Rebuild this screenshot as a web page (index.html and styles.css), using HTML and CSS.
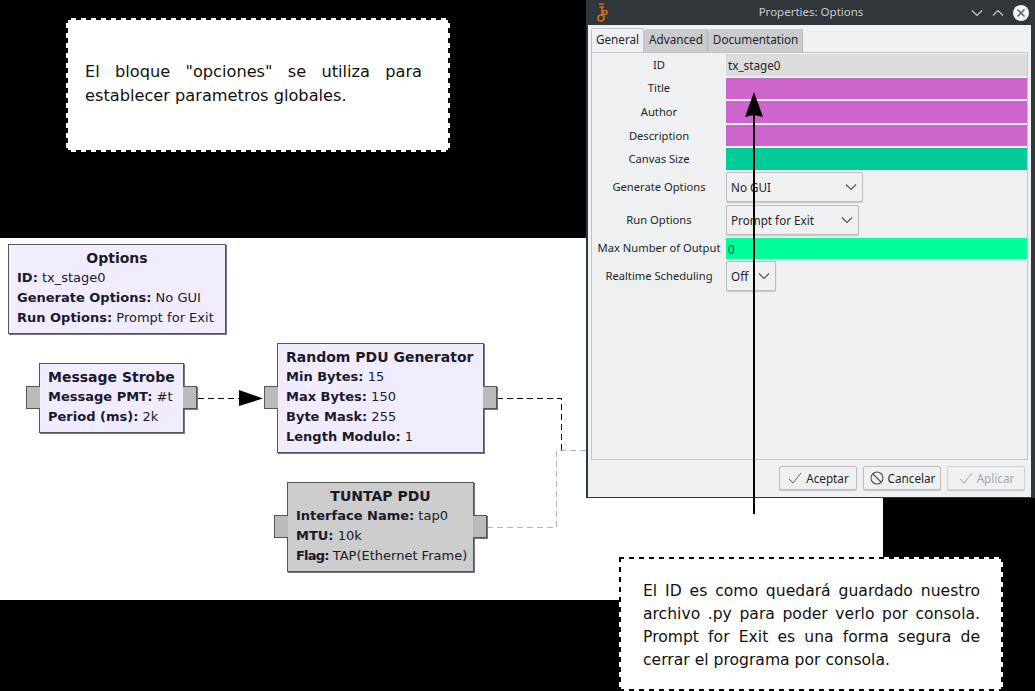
FILE: index.html
```html
<!DOCTYPE html>
<html lang="es">

<head>
  <meta charset="UTF-8">
  <title>Properties: Options</title>
  <link rel="stylesheet" href="styles.css">
</head>

<body>
  <div class="flowgraph">
    <svg class="wires" width="883" height="362" viewBox="0 238 883 362">
      <path class="wire" d="M198 398.5H240"/>
      <path class="head" d="M239 390L263 398.5L239 406Z"/>
      <path class="wire" d="M497 398.5H561.5V450"/>
      <path class="wire off" d="M487 527.5H556.5V450.5H586"/>
    </svg>

    <div class="block strobe">
      <span class="port left"></span><span class="port right"></span>
      <div class="block-title">Message Strobe</div>
      <div class="param"><b>Message PMT:</b> #t</div>
      <div class="param"><b>Period (ms):</b> 2k</div>
    </div>

    <div class="block options">
      <div class="block-title center">Options</div>
      <div class="param"><b>ID:</b> tx_stage0</div>
      <div class="param"><b>Generate Options:</b> No GUI</div>
      <div class="param"><b>Run Options:</b> Prompt for Exit</div>
    </div>

    <div class="block random">
      <span class="port left"></span><span class="port right"></span>
      <div class="block-title">Random PDU Generator</div>
      <div class="param"><b>Min Bytes:</b> 15</div>
      <div class="param"><b>Max Bytes:</b> 150</div>
      <div class="param"><b>Byte Mask:</b> 255</div>
      <div class="param"><b>Length Modulo:</b> 1</div>
    </div>

    <div class="block tuntap">
      <span class="port left"></span><span class="port right"></span>
      <div class="block-title center">TUNTAP PDU</div>
      <div class="param"><b>Interface Name:</b> tap0</div>
      <div class="param"><b>MTU:</b> 10k</div>
      <div class="param"><b class="tight">Flag:</b> TAP(Ethernet Frame)</div>
    </div>
  </div>

  <div class="note note-top">
    <p>El bloque "opciones" se utiliza para establecer parametros globales.</p>
  </div>

  <div class="dialog">
    <div class="titlebar">
      <svg class="app-icon" width="16" height="22" viewBox="0 0 16 22">
        <g fill="none" stroke="#d9691e" stroke-width="1.6">
          <circle cx="7" cy="17" r="3"/>
          <circle cx="11" cy="11.5" r="2"/>
          <path d="M5 3H10M5.5 6H10M8 6V14M8.5 14L10 12.5"/>
        </g>
      </svg>
      <span class="titlebar-text">Properties: Options</span>
      <svg class="win-btn" width="14" height="14" viewBox="0 0 14 14"><path d="M2 4.5L7 9.5L12 4.5" fill="none" stroke="#c8cbce" stroke-width="1.2"/></svg>
      <svg class="win-btn" width="14" height="14" viewBox="0 0 14 14"><path d="M2 9.5L7 4.5L12 9.5" fill="none" stroke="#c8cbce" stroke-width="1.2"/></svg>
      <svg class="win-close" width="16" height="16" viewBox="0 0 16 16">
        <circle cx="8" cy="8" r="8" fill="#f2f3f4"/>
        <path d="M4.5 4.5L11.5 11.5M11.5 4.5L4.5 11.5" stroke="#5b6066" stroke-width="1.5"/>
      </svg>
    </div>

    <div class="dialog-body">
      <div class="tabs">
        <div class="tab active">General</div>
        <div class="tab">Advanced</div>
        <div class="tab">Documentation</div>
      </div>

      <div class="pane">
        <div class="row">
          <label>ID</label>
          <div class="field gray">tx_stage0</div>
        </div>
        <div class="row">
          <label>Title</label>
          <div class="field purple"></div>
        </div>
        <div class="row">
          <label>Author</label>
          <div class="field purple"></div>
        </div>
        <div class="row">
          <label>Description</label>
          <div class="field purple"></div>
        </div>
        <div class="row">
          <label>Canvas Size</label>
          <div class="field teal"></div>
        </div>
        <div class="row row-combo">
          <label>Generate Options</label>
          <div class="combo combo-gen">No GUI<svg width="12" height="8" viewBox="0 0 12 8"><path d="M1 1.5L6 6.5L11 1.5" fill="none" stroke="#4d5257" stroke-width="1.1"/></svg></div>
        </div>
        <div class="row row-combo">
          <label>Run Options</label>
          <div class="combo combo-run">Prompt for Exit<svg width="12" height="8" viewBox="0 0 12 8"><path d="M1 1.5L6 6.5L11 1.5" fill="none" stroke="#4d5257" stroke-width="1.1"/></svg></div>
        </div>
        <div class="row row-max">
          <label>Max Number of Output</label>
          <div class="field green">0</div>
        </div>
        <div class="row row-combo">
          <label>Realtime Scheduling</label>
          <div class="combo combo-off">Off<svg width="12" height="8" viewBox="0 0 12 8"><path d="M1 1.5L6 6.5L11 1.5" fill="none" stroke="#4d5257" stroke-width="1.1"/></svg></div>
        </div>
      </div>

      <div class="buttons">
        <div class="btn">
          <svg width="16" height="16" viewBox="0 0 16 16"><path d="M2 9L6 13L14 3" fill="none" stroke="#5b6066" stroke-width="1"/></svg>
          Aceptar
        </div>
        <div class="btn">
          <svg width="16" height="16" viewBox="0 0 16 16"><circle cx="8" cy="8" r="6" fill="none" stroke="#4d5257" stroke-width="1.1"/><path d="M4 4L12 12" stroke="#4d5257" stroke-width="1.1"/></svg>
          Cancelar
        </div>
        <div class="btn disabled">
          <svg width="16" height="16" viewBox="0 0 16 16"><path d="M2 9L6 13L14 3" fill="none" stroke="#a3a6a9" stroke-width="1"/></svg>
          Aplicar
        </div>
      </div>
    </div>
  </div>

  <div class="note note-bottom">
    <p>El ID es como quedará guardado nuestro archivo .py para poder verlo por consola. Prompt for Exit es una forma segura de cerrar el programa por consola.</p>
  </div>

  <svg class="pointer" width="20" height="422" viewBox="0 0 20 422">
    <path d="M10 20V422" stroke="#000" stroke-width="2"/>
    <path d="M10 0L19 25L10 23L1 25Z" fill="#000"/>
  </svg>
</body>

</html>
```

FILE: styles.css
```css
html,
body {
  margin: 0;
  height: 100%;
}

body {
  position: relative;
  width: 1035px;
  height: 691px;
  overflow: hidden;
  background-color: #000;
  font-family: 'Noto Sans', sans-serif;
}

/* flowgraph canvas */
.flowgraph {
  position: absolute;
  left: 0;
  top: 238px;
  width: 883px;
  height: 362px;
  background-color: #fff;
}

.wires {
  position: absolute;
  left: 0;
  top: 0;
}

.wire {
  fill: none;
  stroke: #000;
  stroke-width: 1;
  stroke-dasharray: 6 4;
}

.wire.off {
  stroke: #b5b5b5;
}

.head {
  fill: #000;
}

.block {
  position: absolute;
  box-sizing: border-box;
  padding: 3px 8px 0;
  background-color: #f1ecff;
  border: 1px solid #555;
  box-shadow: 1px 1px 0 #777;
  font-family: 'DejaVu Sans', sans-serif;
  font-size: 13px;
  color: #1a1a2a;
}

.block-title {
  font-weight: bold;
  font-size: 14px;
  line-height: 20px;
}

.block-title.center {
  text-align: center;
}

.param {
  line-height: 20px;
  white-space: nowrap;
}

.tight {
  letter-spacing: -0.8px;
}

.options {
  left: 8px;
  top: 6px;
  width: 218px;
  height: 90px;
}

.strobe {
  left: 39px;
  top: 125px;
  width: 145px;
  height: 70px;
}

.random {
  left: 277px;
  top: 105px;
  width: 207px;
  height: 110px;
}

.tuntap {
  left: 287px;
  top: 244px;
  width: 187px;
  height: 90px;
  background-color: #cccccc;
}

.port {
  position: absolute;
  box-sizing: border-box;
  top: 50%;
  width: 14px;
  height: 23px;
  margin-top: -12px;
  background-color: #bbbbbb;
  border: 1px solid #555;
}

.port.left {
  left: -14px;
  border-right: none;
}

.port.right {
  right: -14px;
  border-left: none;
  box-shadow: 1px 1px 0 #777;
}

/* white notes, dashes drawn by hand so the period matches */
.note {
  position: absolute;
  box-sizing: border-box;
  display: flex;
  align-items: center;
  background-color: #fff;
  background-image:
    repeating-linear-gradient(90deg, #000 0 5px, transparent 5px 10px),
    repeating-linear-gradient(90deg, #000 0 5px, transparent 5px 10px),
    repeating-linear-gradient(180deg, #000 0 5px, transparent 5px 10px),
    repeating-linear-gradient(180deg, #000 0 5px, transparent 5px 10px);
  background-size: 100% 2px, 100% 2px, 2px 100%, 2px 100%;
  background-position: 0 0, 0 100%, 0 0, 100% 0;
  background-repeat: no-repeat;
  font-family: 'DejaVu Sans', sans-serif;
  color: #111;
}

.note p {
  margin: 0;
  text-align: justify;
}

.note-top {
  left: 66px;
  top: 18px;
  width: 384px;
  height: 134px;
  padding: 0 28px 2px 19px;
  font-size: 16.2px;
  line-height: 24px;
}

.note-bottom {
  left: 619px;
  top: 557px;
  width: 384px;
  height: 134px;
  padding: 4px 23px 0 24px;
  font-size: 15.6px;
  line-height: 23px;
}

/* properties dialog */
.dialog {
  position: absolute;
  left: 586px;
  top: 0;
  width: 449px;
  height: 498px;
  box-sizing: border-box;
  display: flex;
  flex-direction: column;
  background-color: #eff0f1;
  border-left: 2px solid #31363b;
  border-right: 4px solid #31363b;
  border-bottom: 1px solid #31363b;
  font-size: 11.7px;
  color: #232629;
}

.titlebar {
  position: relative;
  display: flex;
  align-items: center;
  gap: 7px;
  height: 25px;
  flex: none;
  padding-right: 2px;
  background-color: #31363b;
}

.app-icon {
  position: absolute;
  left: 6px;
  top: 1px;
}

.titlebar-text {
  flex: 1;
  padding: 0 0 2px 71px;
  text-align: center;
  color: #c8cbce;
  font-size: 11.5px;
}

.win-close {
  margin-left: 1px;
}

.dialog-body {
  flex: 1;
  display: flex;
  flex-direction: column;
  padding: 3px 3px 0;
}

.tabs {
  display: flex;
  height: 24px;
}

.tab {
  padding: 2px 4px 0 5px;
  background-color: #c9cbcd;
  border-right: 1px solid #b4b6b8;
  border-radius: 2px 2px 0 0;
  margin-top: 1px;
}

.tab.active {
  background-color: #eff0f1;
  border: 1px solid #c2c4c6;
  border-bottom: none;
  margin-top: 0;
  padding: 2px 4px 0;
}

.pane {
  height: 408px;
  box-sizing: border-box;
  border: 1px solid #c2c4c6;
}

.row {
  display: flex;
  align-items: center;
  height: 23.6px;
}

.row label {
  width: 134px;
  flex: none;
  padding-bottom: 1px;
  text-align: center;
  white-space: nowrap;
  font-size: 11.2px;
}

.field {
  flex: 1;
  height: 21.6px;
  line-height: 22px;
  padding-left: 2px;
}

.gray {
  background-color: #dcdcdc;
}

.purple {
  background-color: #cc66cc;
}

.teal {
  background-color: #00cc99;
}

.green {
  background-color: #00ff99;
}

.row-combo {
  height: 33px;
}

.row-max {
  height: 23px;
}

.combo {
  box-sizing: border-box;
  display: flex;
  align-items: center;
  justify-content: space-between;
  height: 30px;
  padding: 0 5px 0 4px;
  background-color: #eff0f1;
  border: 1px solid #bcbec0;
  border-radius: 2px;
  box-shadow: 0 1px 1px #c4c6c8;
}

.combo-gen {
  width: 137px;
}

.combo-run {
  width: 133px;
}

.combo-off {
  width: 50px;
}

.buttons {
  display: flex;
  justify-content: flex-end;
  gap: 6px;
  padding: 6px 3px 0 0;
}

.btn {
  box-sizing: border-box;
  display: flex;
  align-items: center;
  justify-content: center;
  gap: 3px;
  width: 78px;
  height: 24px;
  border: 1px solid #bcbec0;
  border-radius: 2px;
  box-shadow: 0 1px 1px #c4c6c8;
}

.btn.disabled {
  color: #a3a6a9;
  border-color: #d2d4d6;
}

.pointer {
  position: absolute;
  left: 744px;
  top: 92px;
}
```
